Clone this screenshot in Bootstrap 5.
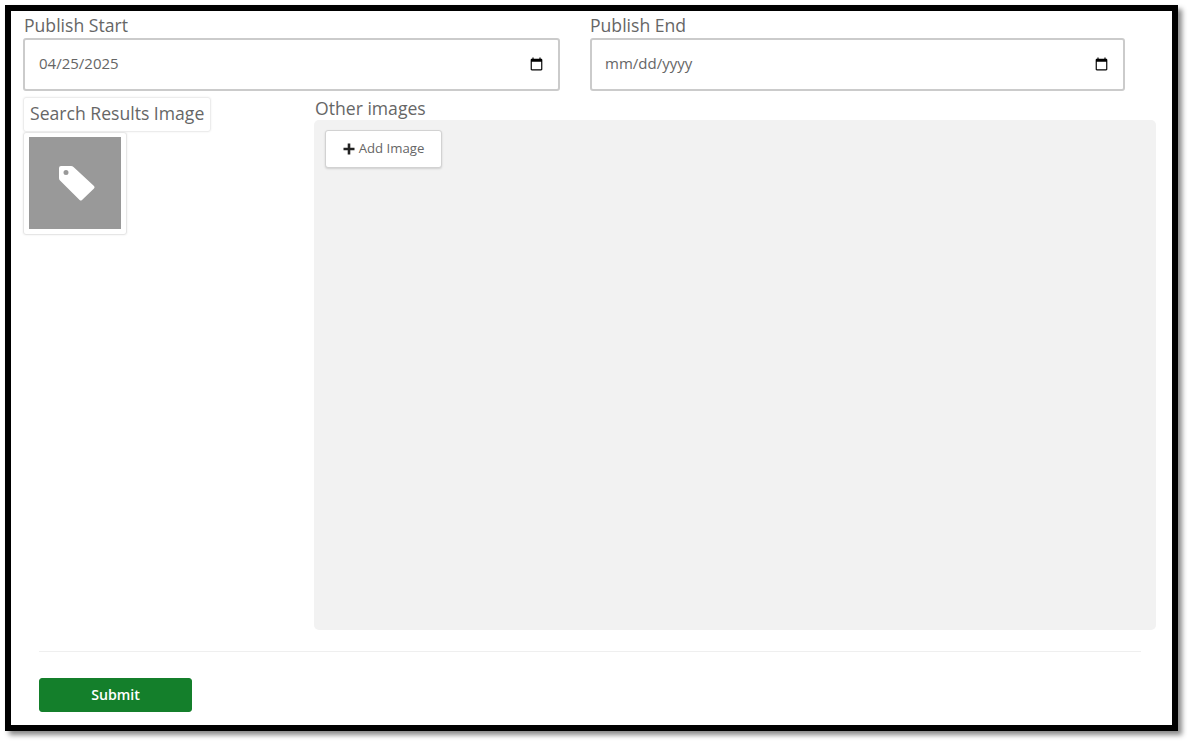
<!DOCTYPE html>
<html lang="en">
<head>
<meta charset="utf-8">
<title>Publish form</title>
<link rel="stylesheet" href="https://cdn.jsdelivr.net/npm/bootstrap@5.3.0/dist/css/bootstrap.min.css">
<style>
html, body { height: 100%; }
body { background: #fff; font-family: "Open Sans", "Liberation Sans", sans-serif; color: #666; padding: 5px 0 0 5px; overflow: hidden; }
.shot-frame { width: 1173px; height: 726px; border: 6px solid #000; background: #fff; box-shadow: 4px 4px 5px #8a8a8a; padding: 4px 12px 0; }
.date-row { display: grid; grid-template-columns: 537px 535px; column-gap: 30px; }
.field-label { font-size: 17.6px; line-height: 20px; height: 23px; color: #666; margin: 0; display: block; padding-left: 1px; }
.end-label { padding-left: 0; }
.date-input { height: 53px; padding: 0 12px 2px 14px; font-size: 15px; font-family: "Open Sans", sans-serif; color: #666; border: 2px solid #cbcbcb; border-radius: 3px; }
.end-input { padding-left: 13px; }
.date-input::-webkit-calendar-picker-indicator { margin-top: 2px; }
.media-row { display: grid; grid-template-columns: 291px 842px; margin-top: 6px; }
.tag-label { display: inline-block; font-size: 17.6px; line-height: 21px; padding: 5px 5px 7px 6px; height: 35px; width: 188px; border: 1px solid #ececec; border-radius: 3px; white-space: nowrap; color: #666; box-shadow: 0 0 2px #ececec; }
.thumb-box { width: 104px; height: 103px; border: 1px solid #e6e6e6; border-radius: 3px; padding: 4px 5px; box-shadow: 0 0 2px #e6e6e6; }
.thumb-fill { width: 92px; height: 92px; background: #999; padding: 1px 0 0 3px; }
.other-label { line-height: 22px; height: 23px; }
.other-panel { height: 510px; background: #f2f2f2; border-radius: 5px; padding: 10px 11px; }
.add-btn { width: 117px; height: 38px; padding: 0; background: #fff; border: 1px solid #d2d2d2; border-radius: 3px; font-size: 13.2px; color: #666; box-shadow: 0 1px 2px #cfcfcf; gap: 4px; }
.add-btn:hover { background: #fff; color: #666; border-color: #d2d2d2; }
.form-foot { margin: 21px 19px 0 16px; }
.foot-rule { margin: 0 0 26px; border: 0; border-top: 1px solid #efefef; opacity: 1; }
.submit-btn { width: 153px; height: 34px; padding: 0; background: #147f2b; border: 1px solid #147f2b; border-radius: 3px; color: #fff; font-size: 14.2px; font-weight: 600; }
.submit-btn:hover { background: #147f2b; color: #fff; border-color: #147f2b; }
</style>
</head>
<body>
<div class="shot-frame">
  <form>
    <div class="date-row">
      <div>
        <label class="field-label" for="ps">Publish Start</label>
        <input class="form-control date-input" id="ps" type="date" value="2025-04-25">
      </div>
      <div>
        <label class="field-label end-label" for="pe">Publish End</label>
        <input class="form-control date-input end-input" id="pe" type="date">
      </div>
    </div>
    <div class="media-row">
      <div>
        <div class="tag-label">Search Results Image</div>
        <div class="thumb-box">
          <div class="thumb-fill d-flex align-items-center justify-content-center">
            <svg width="38" height="37" viewBox="0 0 38 37" aria-hidden="true"><path fill="#fff" fill-rule="evenodd" d="M3 1H13q1.500 0 2.500 1L36 21q1.200 1.200 0 2.400L24 35q-1.200 1.200-2.400 0L2 15.500q-1-1-1-2.500V3q0-2 2-2z M8 5a2.500 2.500 0 1 0 0 5a2.500 2.500 0 0 0 0-5z"/></svg>
          </div>
        </div>
      </div>
      <div>
        <label class="field-label other-label">Other images</label>
        <div class="other-panel">
          <button type="button" class="btn add-btn d-inline-flex align-items-center justify-content-center">
            <svg width="12" height="12" viewBox="0 0 12 12" aria-hidden="true"><path fill="#222" d="M4.700 0.500h2.600v4.200h4.200v2.600H7.300v4.200H4.700V7.300H.5V4.700h4.200z"/></svg>
            <span>Add Image</span>
          </button>
        </div>
      </div>
    </div>
    <div class="form-foot">
      <hr class="foot-rule">
      <button type="button" class="btn submit-btn">Submit</button>
    </div>
  </form>
</div>
<script src="https://cdn.jsdelivr.net/npm/bootstrap@5.3.0/dist/js/bootstrap.bundle.min.js"></script>
</body>
</html>
